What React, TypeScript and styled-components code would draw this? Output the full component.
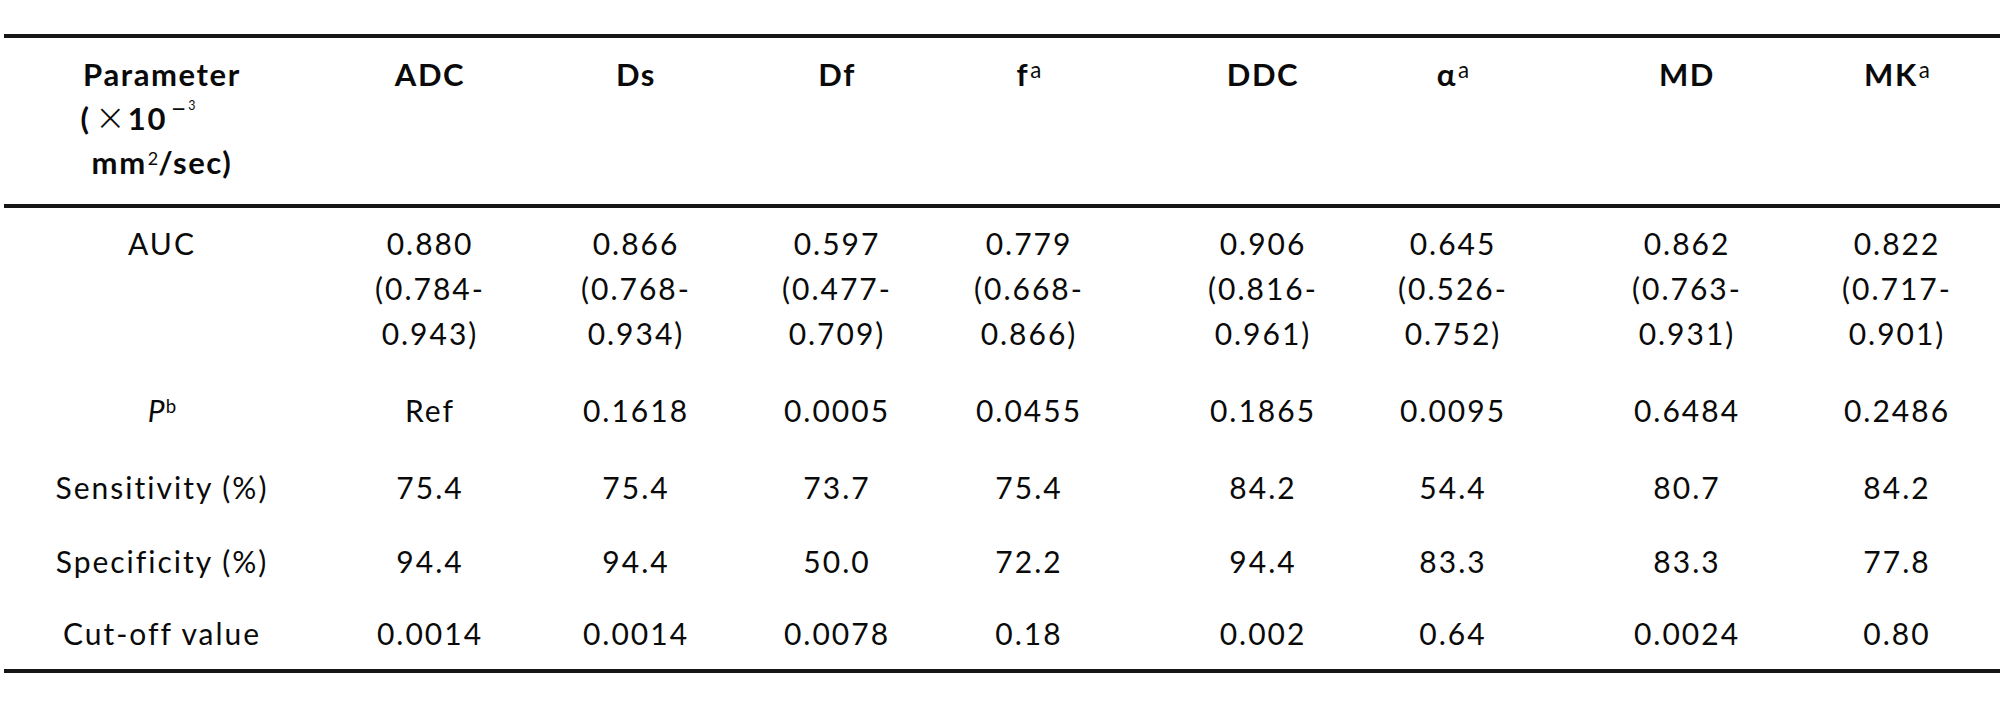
import React from "react";
import styled, { createGlobalStyle } from "styled-components";

const GlobalStyle = createGlobalStyle`
  html, body {
    margin: 0;
    padding: 0;
    background: #ffffff;
  }
  body {
    font-family: Lato, "Open Sans", "Noto Sans", sans-serif;
    color: #0a0a0a;
  }
`;

/* column centres, measured from the left edge of the table */
const CENTERS = [158, 426, 632, 833, 1025, 1259, 1449, 1683, 1893];

function buildTracks(centers: number[]): string {
  let start = 0;
  const out: string[] = [];
  for (const c of centers) {
    const w = 2 * (c - start);
    out.push(`${w}px`);
    start += w;
  }
  out.push("1fr");
  return out.join(" ");
}

const TRACKS = buildTracks(CENTERS);

const Table = styled.div`
  width: 1996px;
  margin: 34px 0 0 4px;
  border-top: 4px solid #161616;
  border-bottom: 4px solid #161616;
  font-size: 30px;
  letter-spacing: 2px;
`;

const HeaderRow = styled.div`
  display: grid;
  grid-template-columns: ${TRACKS};
  padding: 14px 0 20px;
  border-bottom: 4px solid #161616;
  font-weight: 700;
  font-size: 31px;
  letter-spacing: 1.6px;
  line-height: 44px;
  align-items: start;
`;

const Body = styled.div`
  padding: 13px 0 13px;
`;

const Row = styled.div<{ $gap: number }>`
  display: grid;
  grid-template-columns: ${TRACKS};
  margin-top: ${(p) => p.$gap}px;
  line-height: 45px;
  align-items: start;
`;

const Cell = styled.div`
  display: flex;
  flex-direction: column;
  align-items: center;
  white-space: nowrap;
`;

const Line = styled.span<{ $shift?: number }>`
  display: block;
  margin-right: ${(p) => p.$shift ?? 0}px;
`;

const Sup = styled.span<{ $size: number; $raise: number; $gapL?: number }>`
  font-size: ${(p) => p.$size}em;
  font-weight: 400;
  font-style: normal;
  line-height: 0;
  vertical-align: ${(p) => p.$raise}px;
  letter-spacing: 0;
  margin-left: ${(p) => p.$gapL ?? 1}px;
`;

const Times = styled.span`
  font-family: "DejaVu Sans", sans-serif;
  font-weight: 200;
  font-size: 1.2em;
  line-height: 0;
  letter-spacing: 0;
  margin: 0 2px 0 4px;
`;

const Ital = styled.span`
  font-style: italic;
  letter-spacing: 0;
`;

type RowData = {
  label: React.ReactNode;
  values: string[][];
  gap: number;
};

const SupA = () => (
  <Sup $size={0.72} $raise={8}>
    a
  </Sup>
);

const HEADERS: React.ReactNode[] = [
  "ADC",
  "Ds",
  "Df",
  <>
    f<SupA />
  </>,
  "DDC",
  <>
    α<SupA />
  </>,
  "MD",
  <>
    MK<SupA />
  </>,
];

const ROWS: RowData[] = [
  {
    label: "AUC",
    gap: 0,
    values: [
      ["0.880", "(0.784-", "0.943)"],
      ["0.866", "(0.768-", "0.934)"],
      ["0.597", "(0.477-", "0.709)"],
      ["0.779", "(0.668-", "0.866)"],
      ["0.906", "(0.816-", "0.961)"],
      ["0.645", "(0.526-", "0.752)"],
      ["0.862", "(0.763-", "0.931)"],
      ["0.822", "(0.717-", "0.901)"],
    ],
  },
  {
    label: (
      <>
        <Ital>P</Ital>
        <Sup $size={0.62} $raise={9}>
          b
        </Sup>
      </>
    ),
    gap: 32,
    values: [
      ["Ref"],
      ["0.1618"],
      ["0.0005"],
      ["0.0455"],
      ["0.1865"],
      ["0.0095"],
      ["0.6484"],
      ["0.2486"],
    ],
  },
  {
    label: "Sensitivity (%)",
    gap: 32,
    values: [["75.4"], ["75.4"], ["73.7"], ["75.4"], ["84.2"], ["54.4"], ["80.7"], ["84.2"]],
  },
  {
    label: "Specificity (%)",
    gap: 29,
    values: [["94.4"], ["94.4"], ["50.0"], ["72.2"], ["94.4"], ["83.3"], ["83.3"], ["77.8"]],
  },
  {
    label: "Cut-off value",
    gap: 27,
    values: [
      ["0.0014"],
      ["0.0014"],
      ["0.0078"],
      ["0.18"],
      ["0.002"],
      ["0.64"],
      ["0.0024"],
      ["0.80"],
    ],
  },
];

export default function App() {
  return (
    <>
      <GlobalStyle />
      <Table>
        <HeaderRow>
          <Cell>
            <Line>Parameter</Line>
            <Line $shift={48}>
              (<Times>×</Times>10
              <Sup $size={0.85} $raise={12} $gapL={4}>
                −
              </Sup>
              <Sup $size={0.4} $raise={20} $gapL={2}>
                3
              </Sup>
            </Line>
            <Line>
              mm
              <Sup $size={0.58} $raise={9}>
                2
              </Sup>
              /sec)
            </Line>
          </Cell>
          {HEADERS.map((h, i) => (
            <Cell key={i}>
              <Line>{h}</Line>
            </Cell>
          ))}
        </HeaderRow>
        <Body>
          {ROWS.map((r, ri) => (
            <Row key={ri} $gap={r.gap}>
              <Cell>
                <Line>{r.label}</Line>
              </Cell>
              {r.values.map((lines, ci) => (
                <Cell key={ci}>
                  {lines.map((t, li) => (
                    <Line key={li}>{t}</Line>
                  ))}
                </Cell>
              ))}
            </Row>
          ))}
        </Body>
      </Table>
    </>
  );
}
